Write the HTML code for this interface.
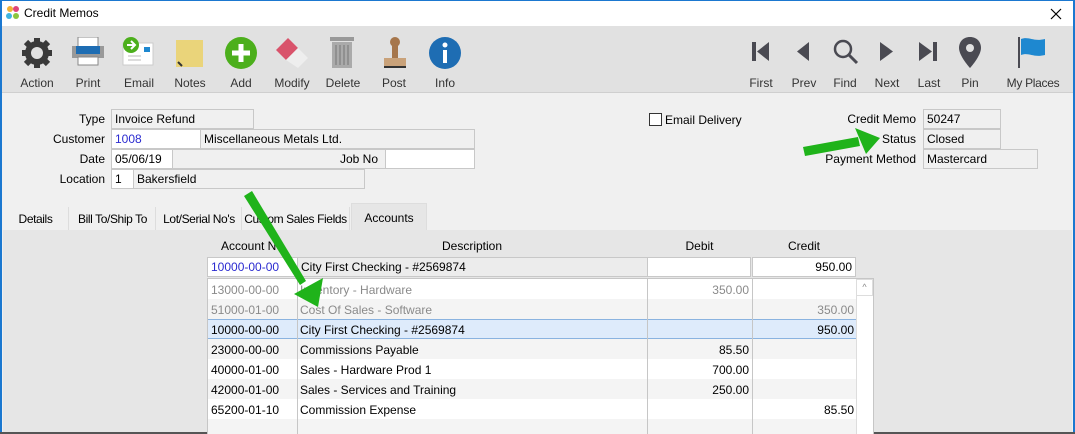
<!DOCTYPE html>
<html><head><meta charset="utf-8"><style>
*{box-sizing:border-box;margin:0;padding:0}
body{width:1075px;height:434px;overflow:hidden;position:relative;font-family:"Liberation Sans",sans-serif;font-size:12px;color:#000;background:#f0f0f0}
.a{position:absolute}
.tb{left:0;top:0;width:1075px;height:26px;background:#fff;border-top:1px solid #1b78d0}
.tool{top:26px;height:67px;left:0;width:1075px;background:#e1e1e1;border-bottom:1px solid #cfcfcf}
.lbl{top:76px;font-size:12px;color:#333;text-align:center;width:60px}
.fl{text-align:right;width:100px}
.box{border:1px solid #c8c8c8;background:#f0f0f0;height:20px;padding:2px 3px;white-space:nowrap}
.w{background:#fff}
.r{text-align:right}
.g{color:#8a8a8a}
.tab{top:207px;height:23px;padding:5px 0;text-align:center;border-right:1px solid #ddd;background:#f0f0f0;white-space:nowrap;letter-spacing:-0.4px;font-size:12px}
</style></head><body>
<div class="a tb"></div>
<svg class="a" style="left:5px;top:5px" width="16" height="16" viewBox="0 0 16 16"><circle cx="5" cy="4" r="3" fill="#f2b134"/><circle cx="11" cy="4" r="3" fill="#e0457b"/><circle cx="4" cy="11" r="3" fill="#3fb5e0"/><circle cx="11" cy="11" r="3" fill="#8cc63f"/></svg>
<div class="a" style="left:24px;top:6px;font-size:12px">Credit Memos</div>
<svg class="a" style="left:1050px;top:8px" width="12" height="12"><path d="M1 1L11 11M11 1L1 11" stroke="#000" stroke-width="1.2"/></svg>
<div class="a tool"></div>
<svg class="a" style="left:20px;top:36px" width="34" height="34" viewBox="0 0 34 34"><g fill="#3a3a3a"><circle cx="17" cy="17" r="12"/><g stroke="#3a3a3a" stroke-width="6"><line x1="17" y1="2" x2="17" y2="32"/><line x1="2" y1="17" x2="32" y2="17"/><line x1="6" y1="6" x2="28" y2="28"/><line x1="28" y1="6" x2="6" y2="28"/></g></g><circle cx="17" cy="17" r="6" fill="#e1e1e1"/></svg>
<svg class="a" style="left:71px;top:37px" width="34" height="32" viewBox="0 0 34 32"><rect x="7" y="0" width="20" height="10" fill="#fff" stroke="#888"/><rect x="1" y="9" width="32" height="12" fill="#999"/><rect x="5" y="9" width="24" height="8" fill="#1e6db3"/><rect x="7" y="20" width="20" height="8" fill="#fff" stroke="#888"/></svg>
<svg class="a" style="left:121px;top:36px" width="34" height="32" viewBox="0 0 34 32"><rect x="2" y="7" width="30" height="22" fill="#fff" stroke="#ccc"/><rect x="23" y="11" width="6" height="5" fill="#1e88d0"/><line x1="7" y1="20" x2="20" y2="20" stroke="#bbb"/><line x1="7" y1="24" x2="20" y2="24" stroke="#bbb"/><circle cx="10" cy="9" r="8" fill="#4caf1c"/><path d="M6 9h7M10 5l4 4-4 4" stroke="#fff" stroke-width="2" fill="none"/></svg>
<svg class="a" style="left:176px;top:40px" width="28" height="28"><rect width="27" height="27" fill="#ead47a"/><path d="M2 22l4 4" stroke="#333" stroke-width="2"/></svg>
<svg class="a" style="left:224px;top:36px" width="34" height="34"><circle cx="17" cy="17" r="16" fill="#4caf1c"/><path d="M17 8v18M8 17h18" stroke="#fff" stroke-width="5"/></svg>
<svg class="a" style="left:274px;top:36px" width="36" height="34"><path d="M2 14L14 2 24 12 12 24z" fill="#d9536b"/><path d="M12 24L24 12 34 22 24 32z" fill="#eee"/></svg>
<svg class="a" style="left:330px;top:37px" width="26" height="32"><rect x="0" y="0" width="24" height="4" fill="#999"/><rect x="2" y="5" width="20" height="26" fill="#aaa"/><g stroke="#888" stroke-width="1.5"><line x1="6" y1="8" x2="6" y2="28"/><line x1="10" y1="8" x2="10" y2="28"/><line x1="14" y1="8" x2="14" y2="28"/><line x1="18" y1="8" x2="18" y2="28"/></g></svg>
<svg class="a" style="left:382px;top:36px" width="26" height="34"><circle cx="13" cy="6" r="5" fill="#a6764b"/><rect x="10" y="9" width="6" height="13" fill="#a6764b"/><rect x="2" y="22" width="22" height="8" fill="#c9a27a"/><rect x="2" y="30" width="22" height="2" fill="#333"/></svg>
<svg class="a" style="left:428px;top:36px" width="34" height="34"><circle cx="17" cy="17" r="16" fill="#1e6db3"/><rect x="15" y="14" width="4" height="13" fill="#fff"/><circle cx="17" cy="9" r="2.5" fill="#fff"/></svg>
<svg class="a" style="left:750px;top:40px" width="22" height="24"><rect x="2" y="2" width="4" height="19" fill="#4a4a52"/><path d="M19 2v19L7 11.5z" fill="#4a4a52"/></svg>
<svg class="a" style="left:794px;top:40px" width="20" height="24"><path d="M15 2v19L3 11.5z" fill="#4a4a52"/></svg>
<svg class="a" style="left:832px;top:38px" width="28" height="28"><circle cx="11" cy="11" r="8" fill="none" stroke="#4a4a52" stroke-width="2.5"/><path d="M17 17l8 8" stroke="#4a4a52" stroke-width="3"/></svg>
<svg class="a" style="left:877px;top:40px" width="20" height="24"><path d="M3 2v19l13-9.5z" fill="#4a4a52"/></svg>
<svg class="a" style="left:917px;top:40px" width="24" height="24"><path d="M2 2v19l13-9.5z" fill="#4a4a52"/><rect x="16" y="2" width="4" height="19" fill="#4a4a52"/></svg>
<svg class="a" style="left:958px;top:36px" width="24" height="34"><path d="M12 1C5 1 1 6 1 12c0 8 11 20 11 20s11-12 11-20C23 6 19 1 12 1z" fill="#4a4a52"/><circle cx="12" cy="12" r="4" fill="#e1e1e1"/></svg>
<svg class="a" style="left:1018px;top:37px" width="30" height="32"><rect x="0" y="0" width="2" height="31" fill="#4a4a52"/><path d="M3 2c8-3 12 3 24 0v16c-12 3-16-3-24 0z" fill="#1e88d0"/></svg>
<div class="a lbl" style="left:7px">Action</div>
<div class="a lbl" style="left:58px">Print</div>
<div class="a lbl" style="left:109px">Email</div>
<div class="a lbl" style="left:160px">Notes</div>
<div class="a lbl" style="left:211px">Add</div>
<div class="a lbl" style="left:262px">Modify</div>
<div class="a lbl" style="left:313px">Delete</div>
<div class="a lbl" style="left:364px">Post</div>
<div class="a lbl" style="left:415px">Info</div>
<div class="a lbl" style="left:731px">First</div>
<div class="a lbl" style="left:774px">Prev</div>
<div class="a lbl" style="left:815px">Find</div>
<div class="a lbl" style="left:857px">Next</div>
<div class="a lbl" style="left:899px">Last</div>
<div class="a lbl" style="left:940px">Pin</div>
<div class="a lbl" style="left:998px;width:70px;letter-spacing:-0.3px">My Places</div>
<div class="a fl" style="left:5px;top:112px">Type</div>
<div class="a box" style="left:111px;top:109px;width:143px">Invoice Refund</div>
<div class="a fl" style="left:5px;top:132px">Customer</div>
<div class="a box w" style="left:111px;top:129px;width:90px;color:#2b2bd0">1008</div>
<div class="a box" style="left:200px;top:129px;width:275px">Miscellaneous Metals Ltd.</div>
<div class="a fl" style="left:5px;top:152px">Date</div>
<div class="a box w" style="left:111px;top:149px;width:62px">05/06/19</div>
<div class="a box" style="left:172px;top:149px;width:214px"></div>
<div class="a" style="left:340px;top:152px">Job No</div>
<div class="a box w" style="left:385px;top:149px;width:90px"></div>
<div class="a fl" style="left:5px;top:172px">Location</div>
<div class="a box w" style="left:111px;top:169px;width:23px">1</div>
<div class="a box" style="left:133px;top:169px;width:232px">Bakersfield</div>
<div class="a" style="left:649px;top:113px;width:13px;height:13px;border:1px solid #333;background:#fff"></div>
<div class="a" style="left:665px;top:113px">Email Delivery</div>
<div class="a" style="left:800px;top:112px;width:116px;text-align:right">Credit Memo</div>
<div class="a box" style="left:923px;top:109px;width:78px">50247</div>
<div class="a" style="left:800px;top:132px;width:116px;text-align:right">Status</div>
<div class="a box" style="left:923px;top:129px;width:78px">Closed</div>
<div class="a" style="left:800px;top:152px;width:116px;text-align:right">Payment Method</div>
<div class="a box" style="left:923px;top:149px;width:115px">Mastercard</div>
<div class="a tab" style="left:3px;width:66px">Details</div>
<div class="a tab" style="left:70px;width:86px">Bill To/Ship To</div>
<div class="a tab" style="left:157px;width:85px">Lot/Serial No's</div>
<div class="a tab" style="left:242px;width:108px">Custom Sales Fields</div>
<div class="a" style="left:351px;top:203px;width:76px;height:28px;background:#e6e6e6;padding-top:7px;text-align:center;border:1px solid #ddd;border-bottom:none">Accounts</div>
<div class="a" style="left:3px;top:230px;width:1069px;height:204px;background:#e6e6e6"></div>
<div class="a" style="left:0;top:0;width:2px;height:434px;background:#1b78d0"></div>
<div class="a" style="left:1073px;top:0;width:2px;height:434px;background:#1b78d0"></div>
<div class="a" style="left:0;top:432px;width:1075px;height:2px;background:#555"></div>
<div class="a" style="left:207px;top:239px;width:90px;text-align:center">Account No</div>
<div class="a" style="left:297px;top:239px;width:350px;text-align:center">Description</div>
<div class="a" style="left:647px;top:239px;width:105px;text-align:center">Debit</div>
<div class="a" style="left:752px;top:239px;width:104px;text-align:center">Credit</div>
<div class="a box w" style="left:207px;top:257px;width:91px;color:#2b2bd0">10000-00-00</div>
<div class="a box" style="left:297px;top:257px;width:351px;background:#ececec">City First Checking - #2569874</div>
<div class="a box w" style="left:647px;top:257px;width:104px"></div>
<div class="a box w r" style="left:752px;top:257px;width:104px">950.00</div>
<div class="a" style="left:207px;top:278px;width:667px;height:156px;background:#f4f4f4;border:1px solid #c6c6c6;border-bottom:none"></div>
<div class="a" style="left:208px;top:279px;width:648px;height:20px;background:#fff"></div>
<div class="a" style="left:208px;top:319px;width:648px;height:20px;background:#deebfb;border-top:1px solid #8ab3e0;border-bottom:1px solid #8ab3e0"></div>
<div class="a" style="left:208px;top:359px;width:648px;height:20px;background:#fff"></div>
<div class="a" style="left:208px;top:399px;width:648px;height:20px;background:#fff"></div>
<div class="a" style="left:297px;top:279px;width:1px;height:155px;background:#c6c6c6"></div>
<div class="a" style="left:647px;top:279px;width:1px;height:155px;background:#c6c6c6"></div>
<div class="a" style="left:752px;top:279px;width:1px;height:155px;background:#c6c6c6"></div>
<div class="a" style="left:856px;top:279px;width:17px;height:155px;background:#fff;border-left:1px solid #ddd"></div>
<div class="a" style="left:856px;top:279px;width:17px;height:17px;border:1px solid #ddd;background:#fff;font-size:9px;color:#888;text-align:center;line-height:15px">^</div>
<div class="a g" style="left:211px;top:283px">13000-00-00</div><div class="a g" style="left:300px;top:283px">Inventory - Hardware</div><div class="a g r" style="left:647px;top:283px;width:102px">350.00</div>
<div class="a g" style="left:211px;top:303px">51000-01-00</div><div class="a g" style="left:300px;top:303px">Cost Of Sales - Software</div><div class="a g r" style="left:752px;top:303px;width:102px">350.00</div>
<div class="a" style="left:211px;top:323px">10000-00-00</div><div class="a" style="left:300px;top:323px">City First Checking - #2569874</div><div class="a r" style="left:752px;top:323px;width:102px">950.00</div>
<div class="a" style="left:211px;top:343px">23000-00-00</div><div class="a" style="left:300px;top:343px">Commissions Payable</div><div class="a r" style="left:647px;top:343px;width:102px">85.50</div>
<div class="a" style="left:211px;top:363px">40000-01-00</div><div class="a" style="left:300px;top:363px">Sales - Hardware Prod 1</div><div class="a r" style="left:647px;top:363px;width:102px">700.00</div>
<div class="a" style="left:211px;top:383px">42000-01-00</div><div class="a" style="left:300px;top:383px">Sales - Services and Training</div><div class="a r" style="left:647px;top:383px;width:102px">250.00</div>
<div class="a" style="left:211px;top:403px">65200-01-10</div><div class="a" style="left:300px;top:403px">Commission Expense</div><div class="a r" style="left:752px;top:403px;width:102px">85.50</div>
<svg class="a" style="left:0;top:0" width="1075" height="434"><g fill="#1fb31a" stroke="none">
<path d="M244 196L252 191 306 281 300 285z"/><path d="M294 294L323 278 318 307z"/>
<path d="M803 147L858 137 860 146 805 156z"/><path d="M855 128L880 138 866 154z"/></g></svg>
</body></html>
